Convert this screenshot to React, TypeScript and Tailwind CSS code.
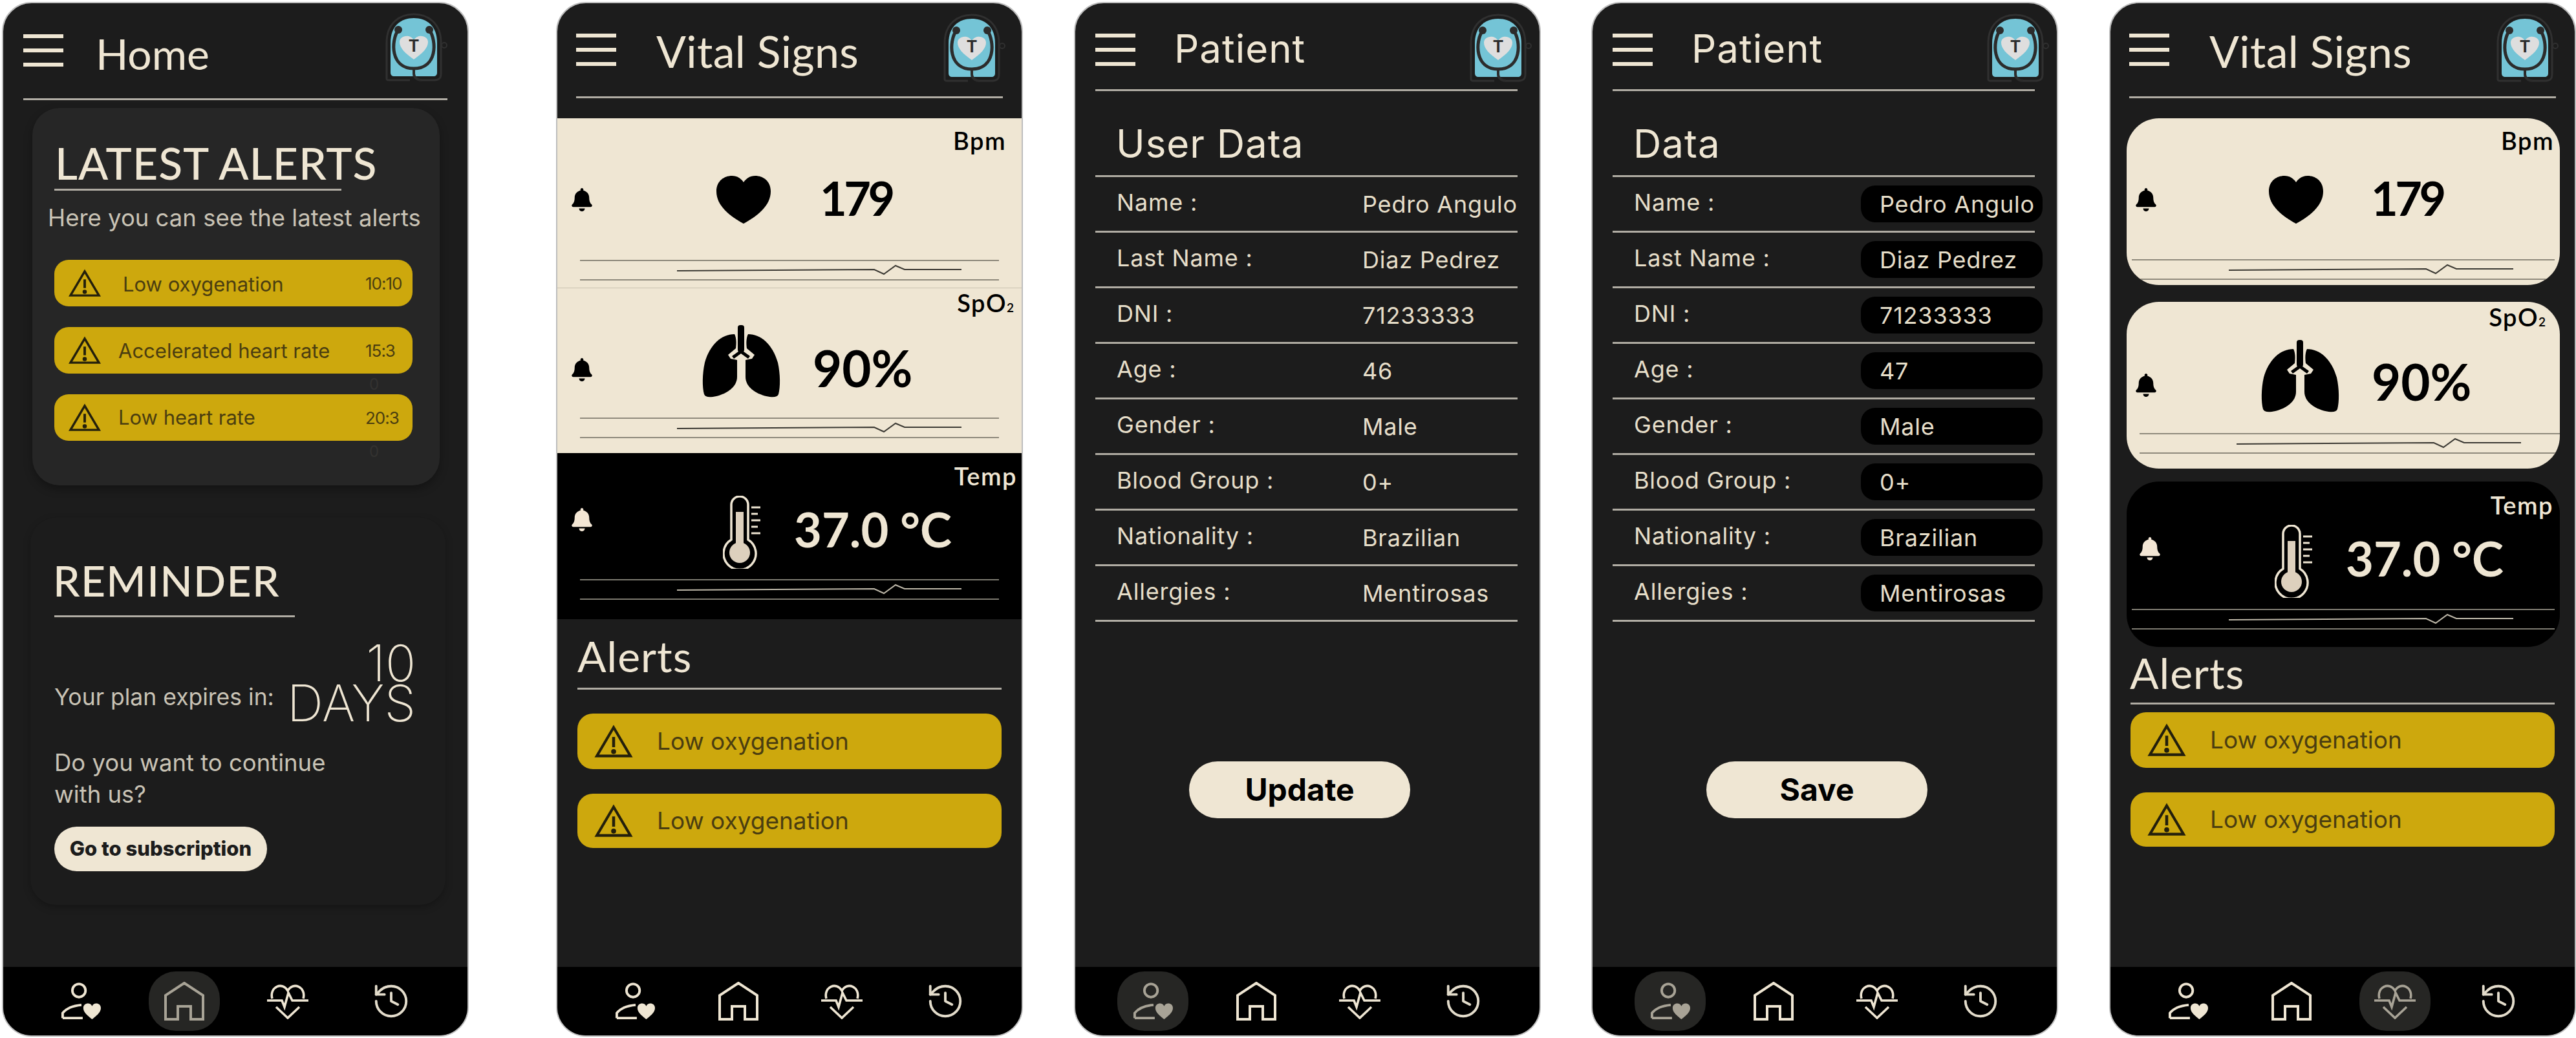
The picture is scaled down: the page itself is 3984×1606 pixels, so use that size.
import React from 'react';
import { History } from 'lucide-react';
import { FaBell } from 'react-icons/fa';

const CREAM = '#efe6d3';

const Logo = () => (
  <svg viewBox="0 0 104 110" className="w-[104px] h-[110px] shrink-0" fill="none">
    <path d="M8 102 V46 C8 16 28 2 50 2 C72 2 92 16 92 46 V94 C92 102 88 104 80 104 H62 M8 102 C8 104 10 104 14 104 H44" stroke="#303030" strokeWidth="3" />
    <circle cx="97" cy="50" r="4" stroke="#303030" strokeWidth="2" />
    <path d="M14 92 V46 C14 20 30 8 50 8 C70 8 86 20 86 46 V92 C86 96 84 98 80 98 H20 C16 98 14 96 14 92 Z" fill="#74c4d6" />
    <path d="M26 26 C14 44 14 86 50 86 C86 86 86 44 74 26" stroke="#2c2c2c" strokeWidth="5" />
    <circle cx="26" cy="26" r="6" fill="#2c2c2c" />
    <circle cx="74" cy="26" r="6" fill="#2c2c2c" />
    <path d="M50 86 V94 C50 100 56 104 62 104" stroke="#2c2c2c" strokeWidth="4" />
    <path d="M50 72 C36 62 28 54 28 45 C28 35 44 32 50 42 C56 32 72 35 72 45 C72 54 64 62 50 72 Z" fill="#dedede" />
    <text x="50" y="60" textAnchor="middle" fontSize="25" fontWeight="700" fill="#2c2c2c" fontFamily="Inter, sans-serif">T</text>
  </svg>
);

const Menu = ({ className }: { className: string }) => (
  <div className={`w-[62px] flex flex-col gap-[16px] shrink-0 ${className}`}>
    <div className="h-[6px] bg-[#efe6d3]" />
    <div className="h-[6px] bg-[#efe6d3]" />
    <div className="h-[6px] bg-[#efe6d3]" />
  </div>
);

const Header = ({ title, variant }: { title: string; variant: 'home' | 'vital' | 'patient' }) => {
  const rowClass = { home: 'pt-[18px] pl-[31px] pr-[29px]', vital: 'pt-[20px] pl-[29px] pr-[23px]', patient: 'pt-[20px] pl-[31px] pr-[10px]' }[variant];
  const menuClass = { home: 'mt-[6px]', vital: 'mt-[2px]', patient: 'mt-[2px]' }[variant];
  const titleClass = {
    home: "ml-[50px] mt-[16px] text-[66px] font-['Lato',sans-serif]",
    vital: "ml-[62px] mt-[6px] text-[68px] tracking-[0.3px] font-['Lato',sans-serif]",
    patient: "ml-[60px] mt-[-2px] text-[60px] tracking-[1px] font-['Inter',sans-serif]",
  }[variant];
  const lineClass = { home: 'mt-[25px] mx-[31px]', vital: 'mt-[22px] mx-[29px]', patient: 'mt-[11px] ml-[31px] mr-[34px]' }[variant];
  return (
    <div className="shrink-0">
      <div className={`flex items-center h-[122px] ${rowClass}`}>
        <Menu className={menuClass} />
        <span className={`leading-none text-[#efe6d3] ${titleClass}`}>{title}</span>
        <div className="ml-auto">
          <Logo />
        </div>
      </div>
      <div className={`h-[3px] bg-[#b0aca3] ${lineClass}`} />
    </div>
  );
};

const TriangleIcon = ({ className }: { className: string }) => (
  <svg viewBox="0 0 52 46" className={className} fill="none" stroke="#231f0c" strokeWidth="3.6">
    <path d="M26 4 L49 43 H3 Z" strokeLinejoin="miter" />
    <path d="M26 17 V31" strokeWidth="4" />
    <circle cx="26" cy="37" r="1.6" fill="#231f0c" />
  </svg>
);

const PersonHeart = ({ color }: { color: string }) => (
  <svg viewBox="0 0 64 60" className="w-[62px] h-[60px]" fill="none" stroke={color} strokeWidth="4">
    <circle cx="29" cy="13" r="10.5" />
    <path d="M3 57 V49 C10 40 22 37 33 36 M3 57 H35" />
    <path d="M50 59 C44 54 36 48 36 41 C36 33 47 31 50 38 C53 31 64 33 64 41 C64 48 56 54 50 59 Z" fill={color} stroke="none" />
  </svg>
);

const HomeIcon = ({ color }: { color: string }) => (
  <svg viewBox="0 0 62 60" className="w-[62px] h-[60px]" fill="none" stroke={color} strokeWidth="4">
    <path d="M2 58 V21 L31 2 L60 21 V58 H41 V38 H21 V58 Z" />
  </svg>
);

const PulseHeart = ({ color }: { color: string }) => (
  <svg viewBox="0 0 64 56" className="w-[64px] h-[56px]" fill="none" stroke={color} strokeWidth="3.6">
    <path d="M8 24 C3 6 24 -3 32 12 C40 -3 61 6 56 24" />
    <path d="M0 27 H23 L27 37 L33 15 L39 27 H64" />
    <path d="M14 37 L32 54 L50 37" />
  </svg>
);

const Nav = ({ active }: { active: number }) => {
  const colorOf = (i: number) => (i === active ? '#a8a396' : CREAM);
  const cell = (i: number) => `w-[110px] h-[92px] rounded-[42px] flex items-center justify-center ${i === active ? 'bg-[#262624]' : ''}`;
  return (
    <div className="mt-auto h-[106px] shrink-0 bg-black flex items-center pl-[65px] gap-[50px]">
      <div className={cell(0)}><PersonHeart color={colorOf(0)} /></div>
      <div className={cell(1)}><HomeIcon color={colorOf(1)} /></div>
      <div className={cell(2)}><PulseHeart color={colorOf(2)} /></div>
      <div className={cell(3)}><History size={62} strokeWidth={1.5} color="#e3dccb" /></div>
    </div>
  );
};

const HeartIcon = () => (
  <svg viewBox="0 0 84 74" className="w-[84px] h-[74px]" fill="#000">
    <path d="M42 74 C20 62 0 46 0 24 C0 8 12 0 24 0 C32 0 38 4 42 10 C46 4 52 0 60 0 C72 0 84 8 84 24 C84 46 64 62 42 74 Z" />
  </svg>
);

const LungsIcon = () => (
  <svg viewBox="0 0 121 112" className="w-[121px] h-[112px]" fill="#000">
    <rect x="55" y="0" width="10" height="42" rx="4" />
    <path d="M60 38 L46 48 L49 52 L60 44 L71 52 L74 48 Z" />
    <path d="M50 14 C30 14 12 30 4 58 C0 76 0 96 3 107 C5 112 12 112 22 110 C38 106 54 96 54 80 V54 L44 52 L40 46 L52 36 C53 28 53 20 50 14 Z" />
    <path d="M71 14 C91 14 109 30 117 58 C121 76 121 96 118 107 C116 112 109 112 99 110 C83 106 67 96 67 80 V54 L77 52 L81 46 L69 36 C68 28 68 20 71 14 Z" />
  </svg>
);

const ThermoIcon = () => (
  <svg viewBox="0 0 58 113" className="w-[58px] h-[113px]" fill="none" stroke={CREAM}>
    <path d="M13 68 V14 A13 13 0 0 1 39 14 V68 A25 25 0 1 1 13 68 Z" strokeWidth="3.5" />
    <rect x="20" y="25" width="12" height="55" fill="#ddd0bd" stroke="none" />
    <circle cx="26" cy="88" r="16" fill="#ddd0bd" stroke="none" />
    <path d="M44 18 H58 M44 28 H54 M44 38 H58 M44 48 H54 M44 58 H58" strokeWidth="3" />
  </svg>
);

const Wave = ({ className, dark }: { className: string; dark?: boolean }) => (
  <div className={`h-[32px] flex items-center border-y-2 ${dark ? 'border-[#7d7a70]' : 'border-[#8f8a7c]'} ${className}`}>
    <svg viewBox="0 0 440 24" className="ml-[150px] w-[440px] h-[24px] shrink-0" fill="none" stroke={dark ? '#bdb7a8' : '#3c3a34'} strokeWidth="2">
      <path d="M0 13 L305 11 L320 18 L338 5 L352 11 H440" />
    </svg>
  </div>
);

interface VitalProps {
  label: React.ReactNode;
  value: string;
  icon: React.ReactNode;
  dark?: boolean;
  boxClass: string;
  labelClass: string;
  rowClass: string;
  bellClass: string;
  iconClass: string;
  valueClass: string;
  waveClass: string;
}

const Vital = (p: VitalProps) => (
  <div className={`flex flex-col overflow-hidden shrink-0 ${p.dark ? 'bg-black text-[#efe6d3]' : 'bg-[#efe6d3] text-black'} ${p.boxClass}`}>
    <div className={`self-end h-[40px] leading-[40px] text-[38px] font-semibold font-['Lato',sans-serif] tracking-[1.5px] whitespace-nowrap ${p.labelClass}`}>{p.label}</div>
    <div className={`flex items-center ${p.rowClass}`}>
      <FaBell size={36} className={`shrink-0 ${p.dark ? 'text-[#f3e6d4]' : 'text-black'} ${p.bellClass}`} />
      <div className={`shrink-0 ${p.iconClass}`}>{p.icon}</div>
      <div className={`leading-none font-bold font-['Lato',sans-serif] whitespace-nowrap ${p.valueClass}`}>{p.value}</div>
    </div>
    <Wave className={p.waveClass} dark={p.dark} />
  </div>
);

const Spo2 = (
  <>
    SpO<span className="text-[19px] tracking-normal">2</span>
  </>
);

const AlertBar = ({ className }: { className: string }) => (
  <div className={`bg-[#cda80d] rounded-[24px] flex items-center text-[#4a3d10] text-[37px] ${className}`}>
    <TriangleIcon className="w-[62px] h-[52px] ml-[25px] mr-[36px]" />
    <span>Low oxygenation</span>
  </div>
);

const TimedAlert = ({ text, time, textClass, tail }: { text: string; time: string; textClass: string; tail?: boolean }) => (
  <div className="relative h-[72px] rounded-[22px] bg-[#cda80d] flex items-center text-[#4a3d10]">
    <TriangleIcon className="w-[50px] h-[44px] ml-[22px] shrink-0" />
    <span className={`text-[31px] whitespace-nowrap ${textClass}`}>{text}</span>
    <span className="ml-auto mr-[21px] w-[52px] text-[26px] tracking-[-1px]">{time}</span>
    {tail && <span className="absolute left-[487px] top-[74px] text-[24px] leading-[30px] text-[#333230]">0</span>}
  </div>
);

const HomeScreen = () => (
  <div className="w-[722px] h-[1601px] shrink-0 rounded-[46px] overflow-hidden border-2 border-[#bdbdbd] bg-[#1c1c1c] flex flex-col ml-[3px]">
    <Header title="Home" variant="home" />
    <div className="mt-[12px] ml-[45px] w-[630px] h-[584px] shrink-0 rounded-[42px] bg-[#262626] shadow-[0_6px_14px_rgba(0,0,0,0.3)] pt-[55px] pl-[34px]">
      <div className="h-[60px] leading-[60px] ml-[1px] font-['Lato',sans-serif] font-medium text-[68px] tracking-[1px] text-[#efe6d3]">LATEST ALERTS</div>
      <div className="mt-[10px] w-[444px] h-[3px] bg-[#b0aca3]" />
      <div className="mt-[22px] -ml-[10px] h-[40px] leading-[40px] text-[36.5px] text-[#c9c3b5] whitespace-nowrap">Here you can see the latest alerts</div>
      <div className="mt-[45px] w-[554px] flex flex-col gap-[32px]">
        <TimedAlert text="Low oxygenation" time="10:10" textClass="ml-[34px] mt-[4px]" />
        <TimedAlert text="Accelerated heart rate" time="15:3" textClass="ml-[27px] mt-[2px]" tail />
        <TimedAlert text="Low heart rate" time="20:3" textClass="ml-[27px]" tail />
      </div>
    </div>
    <div className="mt-[50px] ml-[42px] w-[642px] h-[599px] shrink-0 rounded-[40px] shadow-[0_4px_12px_rgba(0,0,0,0.25)] pt-[72px] pl-[37px]">
      <div className="h-[50px] leading-[50px] -ml-[2px] font-['Lato',sans-serif] font-medium text-[66px] tracking-[1.3px] text-[#efe6d3]">REMINDER</div>
      <div className="mt-[29px] w-[372px] h-[3px] bg-[#b0aca3]" />
      <div className="mt-[40px] w-[559px] flex items-start justify-between">
        <span className="mt-[62px] text-[35.5px] leading-[44px] text-[#c9c3b5] whitespace-nowrap">Your plan expires in:</span>
        <div className="text-right text-[78px] leading-[62px] font-extralight text-[#efe6d3] font-['Inter',sans-serif]">
          <div>10</div>
          <div>DAYS</div>
        </div>
      </div>
      <div className="mt-[37px] text-[36.5px] leading-[49px] text-[#c9c3b5]">
        Do you want to continue
        <br />
        with us?
      </div>
      <button className="mt-[25px] w-[329px] h-[69px] rounded-full bg-[#efe6d3] text-[#1c1c1c] text-[31px] font-extrabold">Go to subscription</button>
    </div>
    <Nav active={1} />
  </div>
);

const VitalsFlat = () => (
  <div className="w-[722px] h-[1601px] shrink-0 rounded-[46px] overflow-hidden border-2 border-[#bdbdbd] bg-[#1c1c1c] flex flex-col ml-[135px]">
    <Header title="Vital Signs" variant="vital" />
    <div className="mt-[31px]">
      <Vital
        label="Bpm"
        value="179"
        icon={<HeartIcon />}
        boxClass="h-[263px] border-b border-[#c9c2b0]"
        labelClass="mt-[14px] mr-[24px]"
        rowClass="mt-[22px] h-[100px] pl-[20px]"
        bellClass=""
        iconClass="ml-[190px]"
        valueClass="ml-[76px] mb-[7px] text-[72px] tracking-[-4.5px]"
        waveClass="mt-[43px] mx-[35px]"
      />
      <Vital
        label={Spo2}
        value="90%"
        icon={<LungsIcon />}
        boxClass="h-[255px]"
        labelClass="mt-[2px] mr-[12px]"
        rowClass="mt-[11px] h-[120px] pl-[20px]"
        bellClass="mt-[26px]"
        iconClass="ml-[168px]"
        valueClass="ml-[50px] mt-[20px] text-[78px]"
        waveClass="mt-[27px] mx-[35px]"
      />
      <Vital
        dark
        label="Temp"
        value="37.0 °C"
        icon={<ThermoIcon />}
        boxClass="h-[257px]"
        labelClass="mt-[15px] mr-[7px]"
        rowClass="mt-[7px] h-[120px] pl-[20px]"
        bellClass="mb-[38px]"
        iconClass="ml-[200px]"
        valueClass="ml-[52px] mb-[8px] text-[74px]"
        waveClass="mt-[13px] mx-[35px]"
      />
    </div>
    <div className="ml-[31px] mt-[27px] h-[60px] leading-[60px] font-['Lato',sans-serif] text-[66px] tracking-[1px] text-[#efe6d3]">Alerts</div>
    <div className="mt-[19px] mx-[31px] h-[3px] bg-[#b0aca3]" />
    <div className="mt-[37px] mx-[31px] flex flex-col gap-[38px]">
      <AlertBar className="h-[86px]" />
      <AlertBar className="h-[84px]" />
    </div>
    <Nav active={-1} />
  </div>
);

const rows = [
  ['Name :', 'Pedro Angulo'],
  ['Last Name :', 'Diaz Pedrez'],
  ['DNI :', '71233333'],
  ['Age :', '46'],
  ['Gender :', 'Male'],
  ['Blood Group :', '0+'],
  ['Nationality :', 'Brazilian'],
  ['Allergies :', 'Mentirosas'],
];

const PatientScreen = ({ heading, button, edit, className }: { heading: string; button: string; edit?: boolean; className: string }) => (
  <div className={`w-[722px] h-[1601px] shrink-0 rounded-[46px] overflow-hidden border-2 border-[#bdbdbd] bg-[#1c1c1c] flex flex-col ${className}`}>
    <Header title="Patient" variant="patient" />
    <div className="mt-[46px] ml-[63px] h-[70px] leading-[70px] text-[60px] tracking-[1px] text-[#efe6d3] shrink-0">{heading}</div>
    <div className="mt-[14px] ml-[31px] mr-[34px] h-[3px] bg-[#b0aca3] shrink-0" />
    {rows.map(([k, v]) => (
      <div key={k} className="ml-[31px] mr-[34px] h-[86px] shrink-0 flex items-center border-b-[3px] border-[#b0aca3] text-[36px] tracking-[0.8px] text-[#e6dec9]">
        <span className="ml-[33px] mb-[6px] w-[351px] shrink-0 whitespace-nowrap">{k}</span>
        {edit ? (
          <span className="h-[57px] w-[281px] pl-[29px] rounded-[22px] bg-black flex items-center shrink-0 whitespace-nowrap">{k === 'Age :' ? '47' : v}</span>
        ) : (
          <span className="ml-[29px] whitespace-nowrap">{v}</span>
        )}
      </div>
    ))}
    <button className="mt-[216px] ml-[176px] w-[342px] h-[88px] shrink-0 rounded-full bg-[#efe6d3] text-black text-[48px] font-bold">{button}</button>
    <Nav active={0} />
  </div>
);

const VitalsCards = () => (
  <div className="w-[722px] h-[1601px] shrink-0 rounded-[46px] overflow-hidden border-2 border-[#bdbdbd] bg-[#1c1c1c] flex flex-col ml-[79px]">
    <Header title="Vital Signs" variant="vital" />
    <div className="mt-[31px] ml-[25px] flex flex-col">
      <Vital
        label="Bpm"
        value="179"
        icon={<HeartIcon />}
        boxClass="w-[670px] h-[258px] rounded-[50px]"
        labelClass="mt-[14px] mr-[9px]"
        rowClass="mt-[22px] h-[100px] pl-[12px]"
        bellClass=""
        iconClass="ml-[172px]"
        valueClass="ml-[74px] mb-[7px] text-[72px] tracking-[-4.5px]"
        waveClass="mt-[42px] mx-[8px]"
      />
      <Vital
        label={Spo2}
        value="90%"
        icon={<LungsIcon />}
        boxClass="mt-[26px] w-[670px] h-[258px] rounded-[50px]"
        labelClass="mt-[3px] mr-[22px]"
        rowClass="mt-[12px] h-[120px] pl-[12px]"
        bellClass="mt-[28px]"
        iconClass="ml-[160px]"
        valueClass="ml-[50px] mt-[16px] text-[78px]"
        waveClass="mt-[28px] ml-[20px]"
      />
      <Vital
        dark
        label="Temp"
        value="37.0 °C"
        icon={<ThermoIcon />}
        boxClass="mt-[20px] w-[670px] h-[256px] rounded-[50px]"
        labelClass="mt-[16px] mr-[10px]"
        rowClass="mt-[7px] h-[120px] pl-[18px]"
        bellClass="mb-[38px]"
        iconClass="ml-[175px]"
        valueClass="ml-[52px] mb-[8px] text-[74px]"
        waveClass="mt-[14px] mx-[8px]"
      />
    </div>
    <div className="ml-[30px] mt-[10px] h-[60px] leading-[60px] font-['Lato',sans-serif] text-[66px] tracking-[1px] text-[#efe6d3]">Alerts</div>
    <div className="mt-[16px] mx-[31px] h-[3px] bg-[#b0aca3]" />
    <div className="mt-[12px] ml-[31px] mr-[31px] flex flex-col gap-[38px]">
      <AlertBar className="h-[86px]" />
      <AlertBar className="h-[84px]" />
    </div>
    <Nav active={2} />
  </div>
);

export default function App() {
  return (
    <div className="w-[3984px] h-[1606px] overflow-hidden bg-white flex items-start pt-[3px] font-['Inter',sans-serif]">
      <HomeScreen />
      <VitalsFlat />
      <PatientScreen heading="User Data" button="Update" className="ml-[79px]" />
      <PatientScreen heading="Data" button="Save" edit className="ml-[78px]" />
      <VitalsCards />
    </div>
  );
}
